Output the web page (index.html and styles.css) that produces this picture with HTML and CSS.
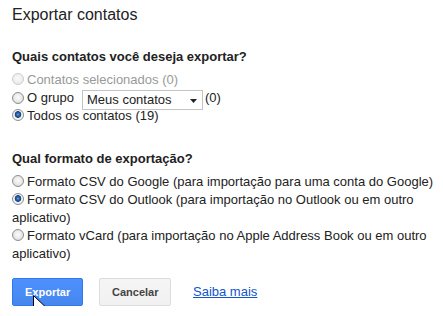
FILE: index.html
```html
<!DOCTYPE html>
<html lang="pt-BR">
<head>
<meta charset="utf-8">
<title>Exportar contatos</title>
<link rel="stylesheet" href="styles.css">
</head>
<body>
<div class="dialog">
  <h1 class="title">Exportar contatos</h1>

  <section class="group group-who">
    <h2 class="heading">Quais contatos você deseja exportar?</h2>
    <div class="options">
      <div class="opt disabled"><span class="radio"></span>Contatos selecionados (0)</div>
      <div class="opt opt-select">
        <span class="radio"></span><span class="label">O grupo</span>
        <span class="select"><span class="select-text">Meus contatos</span><svg class="caret" width="7" height="4" viewBox="0 0 7 4"><path d="M0 0H7L3.5 4Z" fill="#222"/></svg></span>
        <span class="count">(0)</span>
      </div>
      <div class="opt"><span class="radio checked"></span>Todos os contatos (19)</div>
    </div>
  </section>

  <section class="group group-format">
    <h2 class="heading">Qual formato de exportação?</h2>
    <div class="options">
      <div class="opt"><span class="radio"></span>Formato CSV do Google (para importação para uma conta do Google)</div>
      <div class="opt"><span class="radio checked"></span>Formato CSV do Outlook (para importação no Outlook ou em outro aplicativo)</div>
      <div class="opt"><span class="radio"></span>Formato vCard (para importação no Apple Address Book ou em outro aplicativo)</div>
    </div>
  </section>

  <div class="actions">
    <button class="btn btn-primary">Exportar<svg class="pointer" width="13" height="20" viewBox="0 0 13 20"><path d="M0.5 0.5V16.5L4.5 12.5L7.5 18.8L9.8 17.8L6.9 11.6H12.2Z" fill="#fff" stroke="#000" stroke-width="1" stroke-linejoin="miter"/></svg></button>
    <button class="btn btn-default">Cancelar</button>
    <a class="link" href="#">Saiba mais</a>
  </div>
</div>
</body>
</html>
```

FILE: styles.css
```css
html, body {
  margin: 0;
  padding: 0;
  background: #fff;
}

body {
  font-family: "Liberation Sans", Arial, sans-serif;
  font-size: 13px;
  line-height: 18px;
  color: #222;
}

.dialog {
  padding: 6px 4px 0 12px;
}

.title {
  margin: 0;
  font-size: 16px;
  font-weight: normal;
  line-height: 18px;
  color: #222;
}

.heading {
  margin: 0 0 4px;
  font-size: 13px;
  font-weight: bold;
  line-height: 18px;
  color: #222;
}

.group-who {
  margin-top: 24px;
}

.group-who .heading {
  margin-bottom: 5px;
}

.group-format {
  margin-top: 25px;
}

.group-format .heading {
  margin-bottom: 5px;
}

.opt {
  line-height: 18px;
}

.opt.disabled {
  color: #999;
}

.radio {
  display: inline-block;
  width: 12px;
  height: 12px;
  box-sizing: border-box;
  border-radius: 50%;
  border: 1px solid #8f8f8f;
  background: radial-gradient(circle at 50% 45%, #fbfbfb 0, #ececec 45%, #d2d2d2 100%);
  vertical-align: -1px;
  margin-right: 3px;
}

.disabled .radio {
  border-color: #cdcdcd;
  background: radial-gradient(circle at 50% 45%, #fafafa 0, #f0f0f0 50%, #e3e3e3 100%);
}

.radio.checked {
  background: radial-gradient(circle at 50% 45%, #6da5e0 0, #2b64ae 1.5px, #153f79 3px, #e9eef3 3.6px, #f4f4f4 60%, #d8d8d8 100%);
}

.opt-select {
  display: flex;
  align-items: center;
  height: 18px;
}

.select {
  display: flex;
  align-items: center;
  box-sizing: border-box;
  width: 121px;
  height: 20px;
  margin: 4px 0 0 8px;
  padding: 0 5px 0 4px;
  border: 1px solid #c4c4c4;
  background: #fff;
  color: #222;
  line-height: 18px;
}

.select-text {
  flex: 1;
}

.caret {
  display: block;
  margin-top: 1px;
}

.count {
  margin-left: 2px;
}

.actions {
  display: flex;
  align-items: center;
  margin-top: 15px;
}

.btn {
  box-sizing: border-box;
  height: 28px;
  padding: 0 12px;
  border-radius: 2px;
  font-family: "Liberation Sans", Arial, sans-serif;
  font-size: 11px;
  font-weight: bold;
  line-height: 26px;
  cursor: default;
}

.btn-primary {
  position: relative;
  width: 71px;
  border: 1px solid #3079ed;
  background: linear-gradient(#4d90fe, #4787ed);
  color: #fff;
}

.btn-default {
  width: 72px;
  margin-left: 16px;
  border: 1px solid #dcdcdc;
  background: linear-gradient(#f5f5f5, #f1f1f1);
  color: #444;
}

.pointer {
  position: absolute;
  left: 20px;
  top: 16px;
}

.link {
  margin-left: 22px;
  color: #15c;
  text-decoration: underline;
  font-size: 13px;
  line-height: 18px;
}
```
